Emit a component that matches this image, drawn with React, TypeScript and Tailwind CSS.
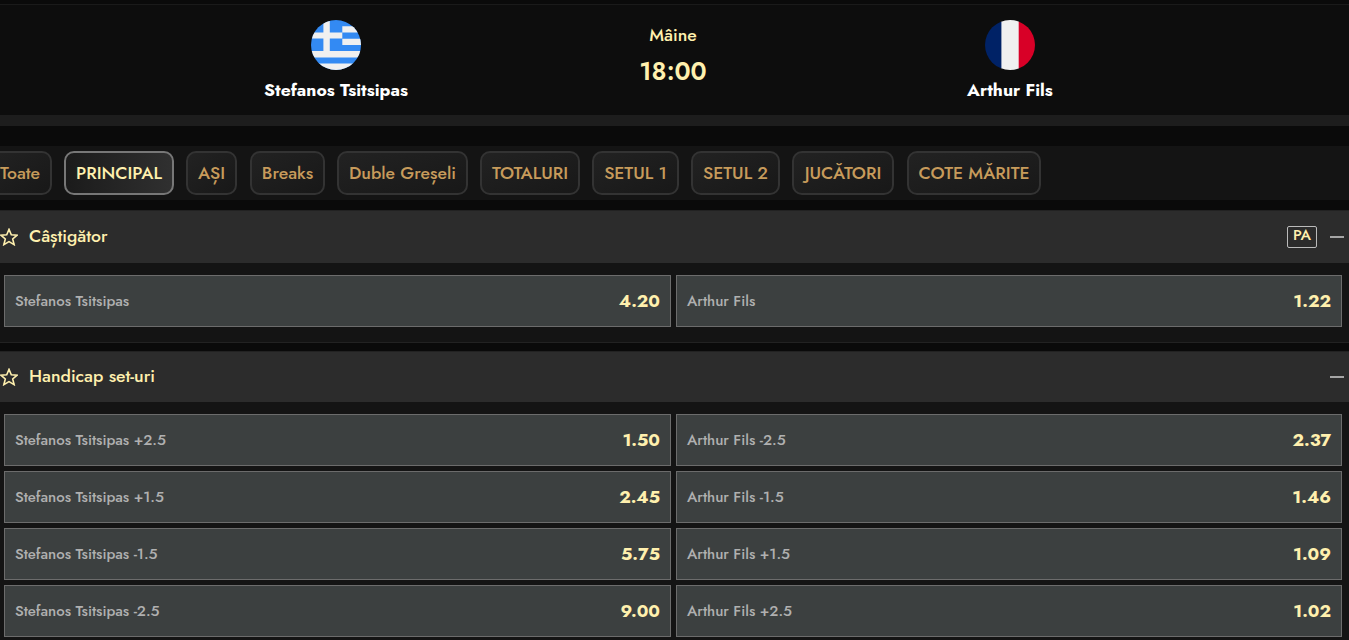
import { useState } from "react";
import clsx from "clsx";

type Outcome = { name: string; odds: string };
type Market = { title: string; headerClass: string; cashout?: boolean; outcomes: Outcome[] };

const TABS = [
  { label: "Toate", className: "w-[64px]" },
  { label: "PRINCIPAL", className: "w-[110px]" },
  { label: "AȘI", className: "w-[51px]" },
  { label: "Breaks", className: "ml-px w-[75px]" },
  { label: "Duble Greșeli", className: "w-[131px]" },
  { label: "TOTALURI", className: "w-[100px]" },
  { label: "SETUL 1", className: "w-[87px]" },
  { label: "SETUL 2", className: "w-[89px]" },
  { label: "JUCĂTORI", className: "w-[102px]" },
  { label: "COTE MĂRITE", className: "ml-px w-[134px]" },
];

const MARKETS: Market[] = [
  {
    title: "Câștigător",
    headerClass: "h-[53px]",
    cashout: true,
    outcomes: [
      { name: "Stefanos Tsitsipas", odds: "4.20" },
      { name: "Arthur Fils", odds: "1.22" },
    ],
  },
  {
    title: "Handicap set-uri",
    headerClass: "h-[51px]",
    outcomes: [
      { name: "Stefanos Tsitsipas +2.5", odds: "1.50" },
      { name: "Arthur Fils -2.5", odds: "2.37" },
      { name: "Stefanos Tsitsipas +1.5", odds: "2.45" },
      { name: "Arthur Fils -1.5", odds: "1.46" },
      { name: "Stefanos Tsitsipas -1.5", odds: "5.75" },
      { name: "Arthur Fils +1.5", odds: "1.09" },
      { name: "Stefanos Tsitsipas -2.5", odds: "9.00" },
      { name: "Arthur Fils +2.5", odds: "1.02" },
    ],
  },
];

function GreeceFlag() {
  return (
    <svg viewBox="0 0 50 50" className="size-[50px] rounded-full">
      <rect width="50" height="50" fill="#338af3" />
      <path
        fill="#f0f0f0"
        d="M12.4 0h6.4v12.4h12.5v6.2H18.8V31h-6.4V18.6H0v-6.2h12.4zM31.3 6.2H50v6.2H31.3zM31.3 18.7H50v6.3H31.3zM0 31h50v6.4H0zM0 43.6h50V50H0z"
      />
    </svg>
  );
}

function FranceFlag() {
  return (
    <svg viewBox="0 0 50 50" className="size-[50px] rounded-full">
      <rect x="16" width="18" height="50" fill="#f0f0f0" />
      <rect width="16.4" height="50" fill="#002266" />
      <rect x="33.7" width="16.3" height="50" fill="#d80027" />
    </svg>
  );
}

function StarIcon() {
  return (
    <svg viewBox="0 0 18 18" className="size-[18px] shrink-0" fill="none" stroke="#fff0ae" strokeWidth="1.6">
      <path d="M9 1.4l2.3 5.3 5.8.5-4.4 3.8 1.4 5.6L9 13.6l-5.1 3 1.4-5.6L.9 7.2l5.8-.5z" />
    </svg>
  );
}

function MatchHeader() {
  return (
    <header className="grid h-[122px] grid-cols-[337px_337px_337px] justify-center border-t border-b-[11px] border-t-[#1a1a1a] border-b-[#1d1d1d] bg-[#0d0d0d] pr-[3px]">
      <div className="flex flex-col items-center pt-[15px]">
        <GreeceFlag />
        <span className="mt-2 text-[17.6px] leading-6 font-bold whitespace-nowrap text-white">Stefanos Tsitsipas</span>
      </div>
      <div className="flex flex-col items-center pt-[18px] text-[#fff0ae]">
        <span className="text-[17.6px] leading-6 font-medium">Mâine</span>
        <span className="mt-2 text-[25px] leading-8 font-semibold">18:00</span>
      </div>
      <div className="flex flex-col items-center pt-[15px]">
        <FranceFlag />
        <span className="mt-2 text-[17.6px] leading-6 font-bold whitespace-nowrap text-white">Arthur Fils</span>
      </div>
    </header>
  );
}

function MarketSection({ market }: { market: Market }) {
  const [open, setOpen] = useState(true);

  return (
    <section className="border-b border-[#222] bg-[#141414] pb-[15px]">
      <div className={clsx("flex items-center border-t border-[#222] bg-[#2c2c2c] pr-[5px]", market.headerClass)}>
        <StarIcon />
        <h2 className="ml-[11px] pb-0.5 text-[17.6px] leading-6 font-medium text-[#fff0ae]">{market.title}</h2>
        {market.cashout && (
          <span className="ml-auto flex h-[22px] w-[30px] items-center justify-center rounded-[2px] border border-[#bbb] pb-0.5 text-[15.2px] leading-none font-medium text-[#fff0ae]">
            PA
          </span>
        )}
        <button
          aria-label="toggle"
          onClick={() => setOpen(!open)}
          className={clsx("h-[2px] w-[14px] bg-[#a5a5a5]", market.cashout ? "ml-[13px]" : "ml-auto")}
        />
      </div>
      {open && (
        <div className="grid grid-cols-[667px_666px] gap-[5px] pt-3 pl-1">
          {market.outcomes.map((outcome) => (
            <button
              key={outcome.name}
              className="flex h-[52px] items-center justify-between border border-[#6c6c6c] bg-[#3c4040] px-2.5"
            >
              <span className="text-[15px] font-medium whitespace-nowrap text-[#b0b0b0]">{outcome.name}</span>
              <span className="text-[17.6px] font-bold text-[#fff0ae]">{outcome.odds}</span>
            </button>
          ))}
        </div>
      )}
    </section>
  );
}

export default function App() {
  const [activeTab, setActiveTab] = useState("PRINCIPAL");

  return (
    <div className="h-[640px] w-[1349px] overflow-hidden bg-[#0a0a0a] pt-1 font-['Jost','Lato',sans-serif]">
      <MatchHeader />

      <nav className="mt-5 flex h-[54px] gap-3 overflow-hidden bg-[#141414] pt-[5px]">
        {TABS.map((tab, i) => (
          <button
            key={tab.label}
            onClick={() => setActiveTab(tab.label)}
            className={clsx(
              "flex h-[44px] shrink-0 items-center justify-center rounded-[10px] border-2 text-[17.6px] font-medium whitespace-nowrap",
              i === 0 && "-ml-3",
              tab.className,
              activeTab === tab.label
                ? "border-[#777] bg-linear-to-r from-[#1b1b1b] to-[#303030] text-[#fff0ae]"
                : "border-[#333] bg-linear-to-br from-[#222] to-[#181818] text-[#c79b5b]"
            )}
          >
            {tab.label}
          </button>
        ))}
      </nav>

      <main className="mt-2.5 flex flex-col gap-2">
        {MARKETS.map((market) => (
          <MarketSection key={market.title} market={market} />
        ))}
      </main>
    </div>
  );
}
